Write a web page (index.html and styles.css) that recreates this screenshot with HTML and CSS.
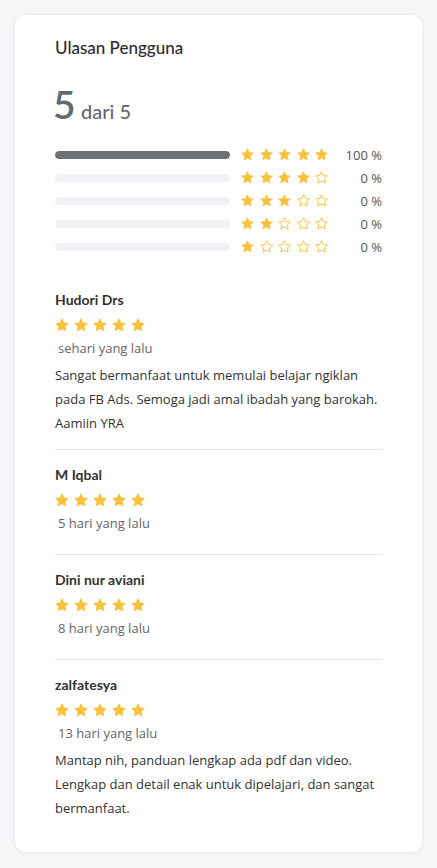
FILE: index.html
```html
<!DOCTYPE html>
<html>
    <head>
        <meta charset="utf-8">
        <link rel="stylesheet" href="styles.css">
    </head>
    <body>
        <svg class="defs" width="0" height="0">
            <symbol id="star" viewBox="0 0 24 24">
                <path d="M12 1.3L15.29 8.27 22.94 9.25 17.33 14.53 18.76 22.1 12 18.4 5.24 22.1 6.67 14.53 1.06 9.25 8.71 8.27z"/>
            </symbol>
        </svg>
        <div class="card">
            <h2 class="card-title">Ulasan Pengguna</h2>
            <div class="score"><span class="score-value">5</span> <span class="score-max">dari 5</span></div>

            <div class="summary">
                <div class="summary-row">
                    <div class="bar"><div class="bar-fill" style="width: 100%"></div></div>
                    <div class="stars stars-sm">
                        <svg class="on"><use href="#star"/></svg><svg class="on"><use href="#star"/></svg><svg class="on"><use href="#star"/></svg><svg class="on"><use href="#star"/></svg><svg class="on"><use href="#star"/></svg>
                    </div>
                    <div class="percent">100 %</div>
                </div>
                <div class="summary-row">
                    <div class="bar"><div class="bar-fill" style="width: 0%"></div></div>
                    <div class="stars stars-sm">
                        <svg class="on"><use href="#star"/></svg><svg class="on"><use href="#star"/></svg><svg class="on"><use href="#star"/></svg><svg class="on"><use href="#star"/></svg><svg class="off"><use href="#star"/></svg>
                    </div>
                    <div class="percent">0 %</div>
                </div>
                <div class="summary-row">
                    <div class="bar"><div class="bar-fill" style="width: 0%"></div></div>
                    <div class="stars stars-sm">
                        <svg class="on"><use href="#star"/></svg><svg class="on"><use href="#star"/></svg><svg class="on"><use href="#star"/></svg><svg class="off"><use href="#star"/></svg><svg class="off"><use href="#star"/></svg>
                    </div>
                    <div class="percent">0 %</div>
                </div>
                <div class="summary-row">
                    <div class="bar"><div class="bar-fill" style="width: 0%"></div></div>
                    <div class="stars stars-sm">
                        <svg class="on"><use href="#star"/></svg><svg class="on"><use href="#star"/></svg><svg class="off"><use href="#star"/></svg><svg class="off"><use href="#star"/></svg><svg class="off"><use href="#star"/></svg>
                    </div>
                    <div class="percent">0 %</div>
                </div>
                <div class="summary-row">
                    <div class="bar"><div class="bar-fill" style="width: 0%"></div></div>
                    <div class="stars stars-sm">
                        <svg class="on"><use href="#star"/></svg><svg class="off"><use href="#star"/></svg><svg class="off"><use href="#star"/></svg><svg class="off"><use href="#star"/></svg><svg class="off"><use href="#star"/></svg>
                    </div>
                    <div class="percent">0 %</div>
                </div>
            </div>

            <div class="reviews">
                <div class="review">
                    <div class="review-name">Hudori Drs</div>
                    <div class="stars">
                        <svg class="on"><use href="#star"/></svg><svg class="on"><use href="#star"/></svg><svg class="on"><use href="#star"/></svg><svg class="on"><use href="#star"/></svg><svg class="on"><use href="#star"/></svg>
                    </div>
                    <div class="review-time">sehari yang lalu</div>
                    <p class="review-text">Sangat bermanfaat untuk memulai belajar ngiklan pada FB Ads. Semoga jadi amal ibadah yang barokah. Aamiin YRA</p>
                </div>
                <div class="review review-short">
                    <div class="review-name">M Iqbal</div>
                    <div class="stars">
                        <svg class="on"><use href="#star"/></svg><svg class="on"><use href="#star"/></svg><svg class="on"><use href="#star"/></svg><svg class="on"><use href="#star"/></svg><svg class="on"><use href="#star"/></svg>
                    </div>
                    <div class="review-time">5 hari yang lalu</div>
                </div>
                <div class="review review-short">
                    <div class="review-name">Dini nur aviani</div>
                    <div class="stars">
                        <svg class="on"><use href="#star"/></svg><svg class="on"><use href="#star"/></svg><svg class="on"><use href="#star"/></svg><svg class="on"><use href="#star"/></svg><svg class="on"><use href="#star"/></svg>
                    </div>
                    <div class="review-time">8 hari yang lalu</div>
                </div>
                <div class="review">
                    <div class="review-name">zalfatesya</div>
                    <div class="stars">
                        <svg class="on"><use href="#star"/></svg><svg class="on"><use href="#star"/></svg><svg class="on"><use href="#star"/></svg><svg class="on"><use href="#star"/></svg><svg class="on"><use href="#star"/></svg>
                    </div>
                    <div class="review-time">13 hari yang lalu</div>
                    <p class="review-text">Mantap nih, panduan lengkap ada pdf dan video. Lengkap dan detail enak untuk dipelajari, dan sangat bermanfaat.</p>
                </div>
            </div>
        </div>
    </body>
</html>
```

FILE: styles.css
```css
body {
    margin: 0;
    padding: 14px 14px 16px 14px;
    font-family: "Open Sans", sans-serif;
    font-size: 13px;
    color: #333;
    background-color: #f5f6f8;
}
.defs {
    position: absolute;
    width: 0;
    height: 0;
}
.card {
    padding: 21px 40px 18px 40px;
    background-color: #fff;
    border: 1px solid #eceef1;
    border-radius: 12px;
    box-shadow: 0 1px 4px rgba(0, 0, 0, 0.04);
}
.card-title {
    margin: 0;
    font-family: Lato, sans-serif;
    font-size: 17px;
    font-weight: 500;
    line-height: 24px;
    color: #2b2b2b;
}
.score {
    margin-top: 20px;
    margin-left: -2px;
    font-family: Lato, sans-serif;
    color: #646a73;
    line-height: 48px;
}
.score-value {
    font-size: 39px;
    font-weight: 600;
}
.score-max {
    font-size: 20px;
    font-weight: 500;
    margin-left: 2px;
}
.summary {
    margin-top: 5px;
}
.summary-row {
    display: flex;
    align-items: center;
    height: 23px;
}
.bar {
    width: 175px;
    height: 8px;
    border-radius: 4px;
    background-color: #f1f2f6;
    overflow: hidden;
}
.bar-fill {
    height: 100%;
    border-radius: 4px;
    background-color: #6b7079;
}
.stars {
    display: flex;
    gap: 5px;
    height: 20px;
    align-items: center;
}
.stars svg {
    width: 14px;
    height: 14px;
    display: block;
}
.stars-sm {
    margin-left: 11px;
    gap: 5.5px;
}
.stars-sm svg {
    width: 13px;
    height: 13px;
}
.stars .on {
    fill: #f8c13b;
    stroke: #f8c13b;
    stroke-width: 1.2;
    stroke-linejoin: round;
}
.stars .off {
    fill: none;
    stroke: #f5be3a;
    stroke-width: 1.7;
    stroke-linejoin: round;
}
.percent {
    flex: 1;
    text-align: right;
    font-size: 13px;
    color: #555;
}
.reviews {
    margin-top: 32px;
}
.review {
    padding: 0 0 14px 0;
    border-bottom: 1px solid #e4e5e7;
}
.review + .review {
    padding-top: 15px;
}
.review:last-child {
    border-bottom: none;
}
.review-short {
    padding-bottom: 21px;
}
.review-name {
    font-family: Lato, sans-serif;
    font-size: 14px;
    font-weight: 700;
    line-height: 20px;
    color: #333;
}
.review .stars {
    margin-top: 5px;
}
.review-time {
    margin-top: 3px;
    padding-left: 3px;
    line-height: 20px;
    color: #666;
}
.review-text {
    margin: 5px 0 0 0;
    line-height: 24px;
    color: #333;
}
```
